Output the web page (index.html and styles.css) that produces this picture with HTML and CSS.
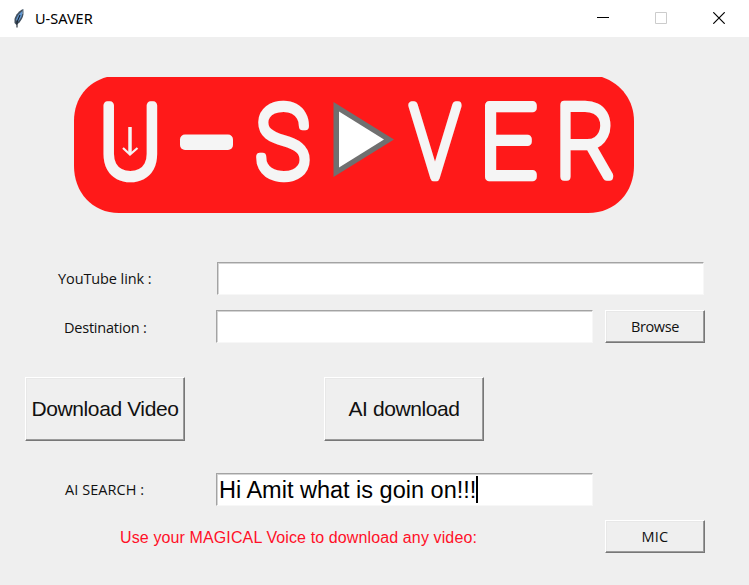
FILE: index.html
```html
<!DOCTYPE html>
<html lang="en">
<head>
<meta charset="utf-8">
<title>U-SAVER</title>
<link rel="stylesheet" href="styles.css">
</head>
<body>
<header class="titlebar">
  <svg class="feather" width="14" height="22" viewBox="0 0 14 22">
    <path d="M11.500 2C7.500 3 3.500 8 2.500 12L2.500 16L4.500 18L7.500 15.500C10.500 12 12.500 7 11.500 2Z" fill="#42505f"/>
    <path d="M10.500 4C7.500 6 5 9 4 13L6 14.500C9 11.500 10.500 8 10.500 4Z" fill="#6299d4"/>
    <path d="M8 8L5 15L5 20.500" fill="none" stroke="#18212c" stroke-width="1.100"/>
    <path d="M11.500 2L11 7" stroke="#b9c5ce" stroke-width="1"/>
  </svg>
  <span class="title">U-SAVER</span>
  <div class="controls">
    <svg width="12" height="12" viewBox="0 0 12 12"><path d="M0 5.500H12" stroke="#000"/></svg>
    <svg width="12" height="12" viewBox="0 0 12 12"><path d="M.5 .5H11.500V11.500H.5Z" fill="none" stroke="#ccc"/></svg>
    <svg width="12" height="12" viewBox="0 0 12 12"><path d="M.3 .3L11.700 11.700M11.700 .3L.3 11.700" stroke="#000" stroke-width="1.200"/></svg>
  </div>
</header>
<main>
  <svg class="logo" width="562" height="138" viewBox="73 76 562 138">
    <path d="M107 77H602C622 84 634 101 634 121V166C634 192 616 213 588 213H119C92 213 74 192 74 166V121C74 98 88 82 107 77Z" fill="#ff1919"/>
    <g class="wordmark">
      <text transform="translate(130.300 176.500) scale(.94 1)">U</text>
      <text transform="translate(282.700 176.500) scale(.91 1)">S</text>
      <text transform="translate(435 176.500) scale(.82 1)">V</text>
      <text transform="translate(508 176.500)">E</text>
      <text transform="translate(585.500 176.500) scale(.92 1)">R</text>
    </g>
    <rect x="180" y="134.500" width="53" height="15.500" rx="5" fill="#f5f5f5"/>
    <path d="M130 127V154" stroke="#f5f5f5" stroke-width="3.500"/>
    <path d="M123 148L130 154.500L137.500 148" fill="none" stroke="#f5f5f5" stroke-width="2.200"/>
    <path d="M333.500 102V177L394 139.500Z" fill="#707070"/>
    <path d="M339 111.500V167.500L384 139.500Z" fill="#fff"/>
  </svg>
  <div class="row link-row"><label class="ui l1">YouTube link :</label><div class="field wide"></div></div>
  <div class="row dest-row"><label class="ui l2">Destination :</label><div class="field"></div><button class="ui small">Browse</button></div>
  <div class="row actions"><button class="big dv">Download Video</button><button class="big">AI download</button></div>
  <div class="row search-row"><label class="ui l3">AI SEARCH :</label><div class="field"><span class="typed">Hi Amit what is goin on!!!</span><i class="caret"></i></div></div>
  <div class="row voice-row"><p class="voice">Use your MAGICAL Voice to download any video:</p><button class="ui small mic">MIC</button></div>
</main>
</body>
</html>
```

FILE: styles.css
```css
* { box-sizing: border-box; }
body { margin: 0; width: 749px; height: 585px; overflow: hidden; background: #efefef; color: #111; font-family: "Liberation Sans", sans-serif; }
.titlebar { height: 37px; background: #fff; display: flex; align-items: center; padding: 0 23px 0 12px; }
.feather { margin-top: -2px; }
.title { font: 14.5px/20px "Noto Sans", sans-serif; margin: -2px 0 0 9px; letter-spacing: 0; color: #000; }
.controls { display: flex; gap: 46px; margin-left: auto; margin-top: -1px; transform: translateX(-1px); }
.logo { display: block; margin: 39px 0 0 73px; }
.wordmark { font-family: "Roboto", sans-serif; font-weight: 100; font-size: 100px; text-anchor: middle; fill: #f5f5f5; stroke: #f5f5f5; stroke-width: 8.5px; stroke-linejoin: round; stroke-linecap: round; }
.row { display: flex; }
.ui { font: 14.5px/20px "Open Sans", sans-serif; letter-spacing: -.4px; white-space: nowrap; }
.field { width: 377px; height: 33px; background: #fff; border: solid; border-width: 1px 1px 1px 1px; border-color: #a3a3a3 #f7f7f7 #f7f7f7 #a3a3a3; box-shadow: inset 1px 1px #d4d4d4; display: flex; align-items: center; padding-left: 1px; }
button { background: #efefef; color: #111; padding: 0; border: 1px solid; border-color: #fff #777 #777 #fff; box-shadow: inset -1px -1px #9b9b9b, inset 1px 1px #e8e8e8; display: flex; justify-content: center; align-items: center; white-space: nowrap; }
.small { width: 100px; height: 33px; margin-left: 12px; }
.mic { letter-spacing: .2px; }
.link-row { margin-top: 48px; }
.wide { width: 487px; }
.dest-row { margin-top: 15px; }
.l1 { width: 217px; padding: 7px 0 0 58px; letter-spacing: -.1px; }
.l2 { width: 216px; padding: 8px 0 0 64px; letter-spacing: -.22px; }
.l3 { width: 216px; padding: 7px 0 0 65px; letter-spacing: .05px; }
.actions { margin-top: 34px; padding-left: 25px; gap: 139px; }
.big { width: 160px; height: 64px; font: 21px/26px "Liberation Sans", sans-serif; letter-spacing: -.4px; }
.search-row { margin-top: 32px; }
.typed { font-size: 23.5px; line-height: 28px; color: #000; white-space: nowrap; margin-left: 1px; }
.caret { width: 2px; height: 27px; background: #000; }
.voice-row { margin-top: 14px; }
.voice { margin: 0; padding: 8px 0 0 120px; width: 593px; font-size: 16px; line-height: 20px; letter-spacing: .12px; color: #ff1028; white-space: nowrap; }
```
